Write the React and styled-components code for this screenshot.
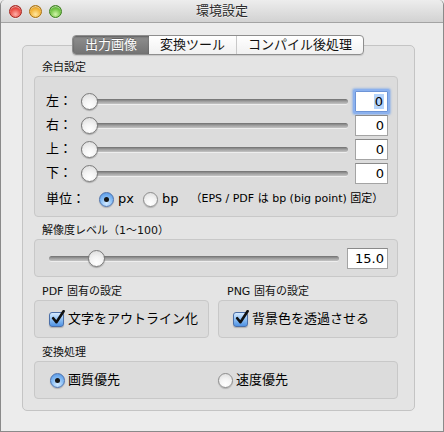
import React from "react";
import styled, { createGlobalStyle, css } from "styled-components";

const FONT = `"DejaVu Sans", "Noto Sans CJK JP", sans-serif`;

const Global = createGlobalStyle`
  html, body { margin: 0; padding: 0; background: #ececec; }
  body { font-family: ${FONT}; color: #000; }
  * { box-sizing: border-box; }
`;

const Window = styled.div`
  width: 444px;
  height: 432px;
  display: flex;
  flex-direction: column;
  background: #ececec;
  border: 1px solid #8a8a8a;
  border-top: none;
  border-radius: 5px 5px 0 0;
  overflow: hidden;
`;

const TitleBar = styled.div`
  height: 23px;
  flex: none;
  display: grid;
  grid-template-columns: 1fr auto 1fr;
  align-items: center;
  background: linear-gradient(#ededed, #d2d2d2);
  border-bottom: 1px solid #a3a3a3;
  border-radius: 5px 5px 0 0;
`;

const Lights = styled.div`
  display: flex;
  gap: 7px;
  padding-left: 8px;
  padding-top: 1px;
`;

const lightColors = {
  red: ["#ffb0a8", "#e8453c", "#a4231c"],
  yellow: ["#ffe7a0", "#f0ad2c", "#a8700e"],
  green: ["#d2f5a8", "#67be3a", "#3c7f1c"],
};

const Light = styled.span`
  width: 13px;
  height: 13px;
  border-radius: 50%;
  border: 1px solid ${(p) => lightColors[p.$c][2]};
  background: radial-gradient(
    circle at 50% 75%,
    ${(p) => lightColors[p.$c][0]} 0%,
    ${(p) => lightColors[p.$c][1]} 60%,
    ${(p) => lightColors[p.$c][2]} 100%
  );
  box-shadow: inset 0 1px 1px rgba(255, 255, 255, 0.6), 0 1px 0 rgba(255,255,255,0.5);
`;

const Title = styled.div`
  font-size: 13px;
  line-height: 16px;
  color: #2a2a2a;
  text-shadow: 0 1px 0 rgba(255, 255, 255, 0.6);
`;

const Content = styled.div`
  flex: 1;
  display: flex;
  flex-direction: column;
  padding: 12px 28px 20px 21px;
`;

const TabBar = styled.div`
  align-self: center;
  display: flex;
  height: 20px;
  margin-bottom: -10px;
  position: relative;
  z-index: 1;
  border: 1px solid #8e8e8e;
  border-radius: 4px;
  background: linear-gradient(#ffffff, #f1f1f1);
  box-shadow: 0 1px 1px rgba(0, 0, 0, 0.12);
  overflow: hidden;
  margin-left: -1px;
`;

const Tab = styled.div`
  display: flex;
  align-items: center;
  padding: 0 11px;
  font-size: 13px;
  line-height: 18px;
  color: #111;
  position: relative;
  ${(p) =>
    p.$active &&
    css`
      padding: 0 12px;
      background: linear-gradient(#8f8f8f, #737373);
      color: #fff;
      box-shadow: inset 0 1px 2px rgba(0, 0, 0, 0.35);
      text-shadow: 0 -1px 0 rgba(0, 0, 0, 0.3);
    `}
  ${(p) =>
    p.$divider &&
    css`
      border-left: 1px solid #c9c9c9;
    `}
`;

const Panel = styled.div`
  flex: 1;
  display: flex;
  flex-direction: column;
  border: 1px solid #c4c4c4;
  border-radius: 5px;
  background: #e4e4e4;
  padding: 15px 16px 9px 11px;
`;

const Section = styled.div`
  display: flex;
  flex-direction: column;
  gap: 2px;
  margin-top: ${(p) => p.$mt || 0}px;
`;

const SectionLabel = styled.div`
  font-size: 11px;
  line-height: 13px;
  padding-left: ${(p) => p.$pl ?? 8}px;
  color: #111;
  white-space: nowrap;
`;

const Group = styled.div`
  height: ${(p) => p.$h}px;
  border: 1px solid #c8c8c8;
  border-radius: 4px;
  background: #dcdcdc;
`;

const MarginGroup = styled(Group)`
  padding: 12px 9px 0 11px;
  display: flex;
  flex-direction: column;
`;

const SliderRow = styled.div`
  display: grid;
  grid-template-columns: 35px minmax(0, 1fr) 40px;
  align-items: center;
  height: 24px;
`;

const RowLabel = styled.div`
  font-size: 13px;
  line-height: 16px;
  white-space: nowrap;
`;

const Slider = styled.div`
  position: relative;
  height: 17px;
  &::before {
    content: "";
    position: absolute;
    left: 0;
    right: 0;
    top: 6px;
    height: 5px;
    border-radius: 3px;
    background: linear-gradient(#6f6f6f, #9c9c9c 45%, #c4c4c4);
    box-shadow: 0 1px 0 rgba(255, 255, 255, 0.5);
  }
`;

const Knob = styled.span`
  position: absolute;
  top: 0;
  width: 17px;
  height: 17px;
  border-radius: 50%;
  border: 1px solid #7b7b7b;
  background: radial-gradient(circle at 50% 80%, #ffffff 0%, #f3f3f3 45%, #d8d8d8 100%);
  box-shadow: 0 1px 1px rgba(0, 0, 0, 0.25);
`;

const Field = styled.div`
  height: 21px;
  width: ${(p) => p.$w}px;
  justify-self: end;
  background: #fff;
  border: 1px solid #a4a4a4;
  border-top-color: #8a8a8a;
  font-size: 13px;
  line-height: 19px;
  text-align: right;
  padding-right: 3px;
  ${(p) =>
    p.$focus &&
    css`
      border-color: #6d94d6;
      border-radius: 1px;
      box-shadow: 0 0 0 2px #8bb1ee, 0 0 2px 3px rgba(110, 160, 235, 0.55);
    `}
`;

const Selected = styled.span`
  background: #b5d4fb;
  padding: 0 1px;
`;

const UnitRow = styled.div`
  display: flex;
  align-items: center;
  height: 24px;
  margin-top: 2px;
`;

const UnitLabel = styled(RowLabel)`
  width: 53px;
`;

const Choice = styled.div`
  display: flex;
  align-items: center;
  gap: ${(p) => p.$gap ?? 4}px;
  font-size: 13px;
  line-height: 16px;
  margin-right: ${(p) => p.$mr || 0}px;
  white-space: nowrap;
`;

const Radio = styled.span`
  width: 15px;
  height: 15px;
  flex: none;
  border-radius: 50%;
  display: flex;
  align-items: center;
  justify-content: center;
  ${(p) =>
    p.$on
      ? css`
          border: 1px solid #4d72ad;
          background: radial-gradient(circle at 50% 80%, #d4eaff 0%, #8cc0f5 45%, #4b8fe2 100%);
          box-shadow: 0 1px 1px rgba(0, 0, 0, 0.2);
        `
      : css`
          border: 1px solid #8d8d8d;
          background: radial-gradient(circle at 50% 80%, #ffffff 0%, #f4f4f4 45%, #dadada 100%);
          box-shadow: 0 1px 1px rgba(0, 0, 0, 0.2);
        `}
`;

const Dot = styled.span`
  width: 5px;
  height: 5px;
  border-radius: 50%;
  background: #151515;
`;

const Note = styled.span`
  font-size: 11px;
  line-height: 14px;
  white-space: nowrap;
`;

const ResGroup = styled(Group)`
  display: grid;
  grid-template-columns: minmax(0, 1fr) 49px;
  align-items: center;
  padding: 0 9px 0 14px;
`;

const TwoCol = styled.div`
  display: grid;
  grid-template-columns: 175px 1fr;
  column-gap: 9px;
  margin-top: ${(p) => p.$mt || 0}px;
`;

const CheckGroup = styled(Group)`
  display: flex;
  align-items: center;
  padding-left: 14px;
`;

const Check = styled.span`
  width: 15px;
  height: 15px;
  flex: none;
  border-radius: 3px;
  border: 1px solid #4b6fa8;
  background: linear-gradient(#d6eaff, #8dbff3 50%, #4f92e3);
  box-shadow: 0 1px 1px rgba(0, 0, 0, 0.2);
  display: flex;
  align-items: center;
  justify-content: center;
  position: relative;
`;

const CheckMark = styled.svg`
  position: absolute;
  left: 1px;
  top: -3px;
  width: 14px;
  height: 15px;
`;

const RadioGroup = styled(Group)`
  display: grid;
  grid-template-columns: 168px 1fr;
  align-items: center;
  padding-left: 15px;
`;

function MarginSlider({ label, focus }) {
  return (
    <SliderRow>
      <RowLabel>{label}</RowLabel>
      <Slider>
        <Knob style={{ left: 0 }} />
      </Slider>
      <Field $w={33} $focus={focus}>
        {focus ? <Selected>0</Selected> : "0"}
      </Field>
    </SliderRow>
  );
}

function CheckItem({ children }) {
  return (
    <Choice $gap={4}>
      <Check>
        <CheckMark viewBox="0 0 14 15">
          <path
            d="M2.2 8.2 L5.4 12.2 L12.6 1.2"
            fill="none"
            stroke="#111"
            strokeWidth="2.6"
            strokeLinecap="round"
            strokeLinejoin="round"
          />
        </CheckMark>
      </Check>
      {children}
    </Choice>
  );
}

export default function App() {
  const res = 15;
  const pct = (res - 1) / 99;
  return (
    <>
      <Global />
      <Window>
        <TitleBar>
          <Lights>
            <Light $c="red" />
            <Light $c="yellow" />
            <Light $c="green" />
          </Lights>
          <Title>環境設定</Title>
          <div />
        </TitleBar>
        <Content>
          <TabBar>
            <Tab $active>出力画像</Tab>
            <Tab>変換ツール</Tab>
            <Tab $divider>コンパイル後処理</Tab>
          </TabBar>
          <Panel>
            <Section>
              <SectionLabel>余白設定</SectionLabel>
              <MarginGroup $h={141}>
                <MarginSlider label="左：" focus />
                <MarginSlider label="右：" />
                <MarginSlider label="上：" />
                <MarginSlider label="下：" />
                <UnitRow>
                  <UnitLabel>単位：</UnitLabel>
                  <Choice $mr={9}>
                    <Radio $on>
                      <Dot />
                    </Radio>
                    px
                  </Choice>
                  <Choice $mr={12}>
                    <Radio />
                    bp
                  </Choice>
                  <Note>（EPS / PDF は bp (big point) 固定）</Note>
                </UnitRow>
              </MarginGroup>
            </Section>

            <Section $mt={7}>
              <SectionLabel>解像度レベル（1〜100）</SectionLabel>
              <ResGroup $h={38}>
                <Slider>
                  <Knob style={{ left: `calc(${pct} * (100% - 17px))` }} />
                </Slider>
                <Field $w={41}>15.0</Field>
              </ResGroup>
            </Section>

            <TwoCol $mt={8}>
              <Section>
                <SectionLabel>PDF 固有の設定</SectionLabel>
                <CheckGroup $h={38}>
                  <CheckItem>文字をアウトライン化</CheckItem>
                </CheckGroup>
              </Section>
              <Section>
                <SectionLabel $pl={9}>PNG 固有の設定</SectionLabel>
                <CheckGroup $h={38}>
                  <CheckItem>背景色を透過させる</CheckItem>
                </CheckGroup>
              </Section>
            </TwoCol>

            <Section $mt={8}>
              <SectionLabel>変換処理</SectionLabel>
              <RadioGroup $h={38}>
                <Choice $gap={3}>
                  <Radio $on>
                    <Dot />
                  </Radio>
                  画質優先
                </Choice>
                <Choice $gap={3}>
                  <Radio />
                  速度優先
                </Choice>
              </RadioGroup>
            </Section>
          </Panel>
        </Content>
      </Window>
    </>
  );
}
